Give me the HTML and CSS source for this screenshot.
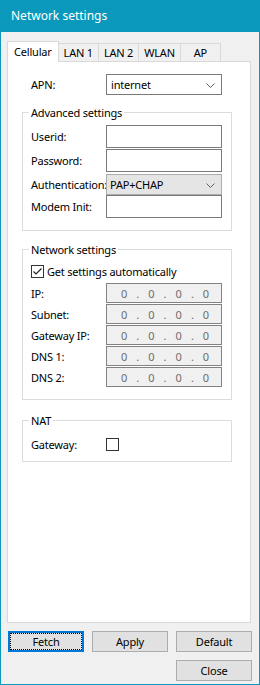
FILE: index.html
```html
<!DOCTYPE html>
<html lang="en">
<head>
    <meta charset="UTF-8">
    <title>Network settings</title>
    <link rel="stylesheet" href="styles.css">
</head>
<body>

<div class="window">
    <div class="titlebar">Network settings</div>
    <div class="client">
        <div class="tabs">
            <div class="tab active">Cellular</div>
            <div class="tab">LAN 1</div>
            <div class="tab">LAN 2</div>
            <div class="tab">WLAN</div>
            <div class="tab">AP</div>
        </div>

        <div class="panel">
            <div class="row apn-row">
                <span class="label">APN:</span>
                <div class="combo">
                    <span>internet</span>
                    <svg class="chevron" width="9" height="5" viewBox="0 0 9 5"><path d="M0.5 0.5 L4.5 4.5 L8.5 0.5" fill="none" stroke="#606060" stroke-width="1"/></svg>
                </div>
            </div>

            <div class="group group-advanced">
                <div class="group-title">Advanced settings</div>
                <div class="row row-userid">
                    <span class="label">Userid:</span>
                    <div class="textbox"></div>
                </div>
                <div class="row row-password">
                    <span class="label">Password:</span>
                    <div class="textbox"></div>
                </div>
                <div class="row row-auth">
                    <span class="label">Authentication:</span>
                    <div class="combo combo-list">
                        <span>PAP+CHAP</span>
                        <svg class="chevron" width="9" height="5" viewBox="0 0 9 5"><path d="M0.5 0.5 L4.5 4.5 L8.5 0.5" fill="none" stroke="#606060" stroke-width="1"/></svg>
                    </div>
                </div>
                <div class="row">
                    <span class="label">Modem Init:</span>
                    <div class="textbox"></div>
                </div>
            </div>

            <div class="group group-network">
                <div class="group-title">Network settings</div>
                <div class="check-row">
                    <span class="checkbox">
                        <svg width="11" height="11" viewBox="0 0 11 11"><path d="M1.5 5.5 L4 8 L9.5 2.5" fill="none" stroke="#222" stroke-width="1.2"/></svg>
                    </span>
                    <span>Get settings automatically</span>
                </div>
                <div class="row row-ip">
                    <span class="label">IP:</span>
                    <div class="ipbox"><span>0</span><span>.</span><span>0</span><span>.</span><span>0</span><span>.</span><span>0</span></div>
                </div>
                <div class="row row-ip">
                    <span class="label">Subnet:</span>
                    <div class="ipbox"><span>0</span><span>.</span><span>0</span><span>.</span><span>0</span><span>.</span><span>0</span></div>
                </div>
                <div class="row row-ip">
                    <span class="label">Gateway IP:</span>
                    <div class="ipbox"><span>0</span><span>.</span><span>0</span><span>.</span><span>0</span><span>.</span><span>0</span></div>
                </div>
                <div class="row row-ip">
                    <span class="label">DNS 1:</span>
                    <div class="ipbox"><span>0</span><span>.</span><span>0</span><span>.</span><span>0</span><span>.</span><span>0</span></div>
                </div>
                <div class="row row-ip">
                    <span class="label">DNS 2:</span>
                    <div class="ipbox"><span>0</span><span>.</span><span>0</span><span>.</span><span>0</span><span>.</span><span>0</span></div>
                </div>
            </div>

            <div class="group group-nat">
                <div class="group-title">NAT</div>
                <div class="row row-nat">
                    <span class="label">Gateway:</span>
                    <span class="checkbox"></span>
                </div>
            </div>
        </div>

        <div class="buttons">
            <button class="btn focused">Fetch</button>
            <button class="btn">Apply</button>
            <button class="btn">Default</button>
            <button class="btn btn-close">Close</button>
        </div>
    </div>
</div>

</body>
</html>
```

FILE: styles.css
```css
body {
    margin: 0;
    font-family: "Noto Sans", "Open Sans", sans-serif;
    font-size: 11px;
    letter-spacing: -0.2px;
    color: #000;
}

.window {
    width: 260px;
    height: 685px;
    box-sizing: border-box;
    border: 1px solid #0a99bc;
    border-top: 0;
    background-color: #f0f0f0;
    display: flex;
    flex-direction: column;
}

.titlebar {
    height: 32px;
    flex-shrink: 0;
    background-color: #0a99bc;
    color: #fff;
    font-size: 12px;
    letter-spacing: 0;
    line-height: 32px;
    padding-left: 11px;
    margin: 0 -1px;
}

.client {
    padding: 9px 0 0 6px;
}

/* Tabs */
.tabs {
    display: flex;
    align-items: flex-end;
    height: 20px;
}

.tab {
    height: 18px;
    box-sizing: border-box;
    border: 1px solid #d9d9d9;
    border-bottom: 0;
    background-color: #f0f0f0;
    padding: 0 5px;
    min-width: 41px;
    text-align: center;
    line-height: 17px;
    margin-left: -1px;
}

.tab.active {
    position: relative;
    z-index: 1;
    height: 21px;
    margin-bottom: -1px;
    margin-left: 0;
    background-color: #fff;
    padding: 0 6px;
    line-height: 19px;
}

.panel {
    width: 244px;
    height: 562px;
    box-sizing: border-box;
    border: 1px solid #d9d9d9;
    background-color: #fff;
    padding: 12px 0 0 14px;
}

/* Rows */
.row {
    display: flex;
    align-items: center;
}

.label {
    width: 75px;
    flex-shrink: 0;
    white-space: nowrap;
}

.apn-row {
    padding-left: 9px;
}

.combo {
    width: 116px;
    height: 21px;
    box-sizing: border-box;
    border: 1px solid #7a7a7a;
    background-color: #fff;
    display: flex;
    align-items: center;
    justify-content: space-between;
    padding: 0 6px 0 4px;
}

.combo-list {
    background-color: #e5e5e5;
    border-color: #acacac;
    padding-left: 3px;
}

.chevron {
    margin-top: 1px;
}

.textbox {
    width: 116px;
    height: 23px;
    box-sizing: border-box;
    border: 1px solid #7a7a7a;
    background-color: #fff;
}

/* Group boxes */
.group {
    width: 210px;
    box-sizing: border-box;
    border: 1px solid #dcdcdc;
    padding: 0 0 12px 8px;
}

.group-title {
    width: max-content;
    line-height: 15px;
    margin: -8px 0 0 -2px;
    padding: 0 2px;
    background-color: #fff;
}

.group-advanced {
    margin-top: 17px;
}

.row-userid {
    margin-top: 5px;
}

.row-password {
    margin-top: 1px;
}

.row-auth {
    margin-top: 2px;
}

.group-network {
    margin-top: 18px;
}

.check-row {
    display: flex;
    align-items: center;
    height: 13px;
    margin-top: 8px;
}

.checkbox {
    width: 13px;
    height: 13px;
    box-sizing: border-box;
    border: 1px solid #333;
    background-color: #fff;
    display: flex;
    align-items: center;
    justify-content: center;
    margin-right: 3px;
}

.row-ip {
    margin-top: 1px;
}

.check-row + .row-ip {
    margin-top: 5px;
}

.ipbox {
    width: 116px;
    height: 20px;
    box-sizing: border-box;
    border: 1px solid #828282;
    background-color: #f0f0f0;
    color: #6d6d6d;
    display: flex;
    align-items: center;
    justify-content: space-between;
    padding: 0 12px 0 14px;
}

.group-nat {
    margin-top: 20px;
    padding-bottom: 10px;
}

.row-nat {
    margin-top: 10px;
    height: 13px;
}

/* Buttons */
.buttons {
    display: flex;
    flex-wrap: wrap;
    column-gap: 8px;
    row-gap: 8px;
    width: 246px;
    margin-top: 8px;
    padding-left: 1px;
}

.btn {
    width: 76px;
    height: 21px;
    box-sizing: border-box;
    border: 1px solid #adadad;
    background-color: #e1e1e1;
    font-family: inherit;
    font-size: 11px;
    letter-spacing: -0.2px;
    color: #000;
    padding: 0;
}

.btn.focused {
    border: 2px solid #0078d7;
    outline: 1px dotted #000;
    outline-offset: -3px;
}

.btn-close {
    margin-left: 168px;
}
```
